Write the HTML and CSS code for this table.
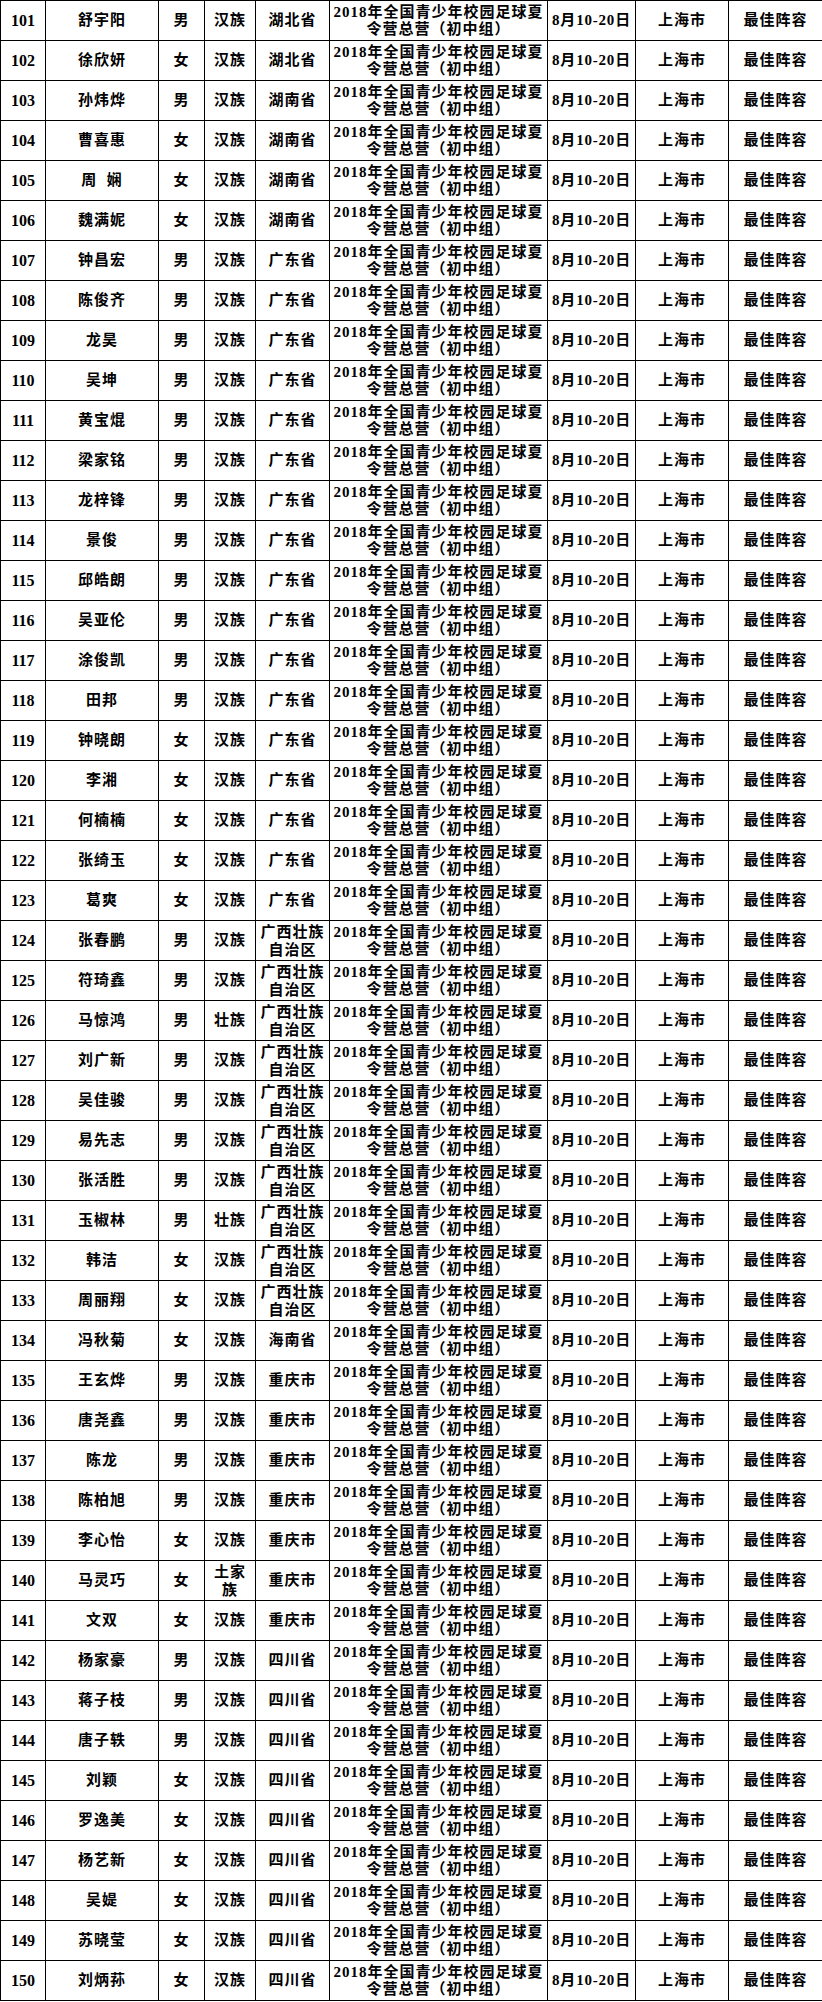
FILE: index.html
```html
<!DOCTYPE html>
<html lang="zh-CN">
<head>
<meta charset="utf-8">
<title>名单</title>
<link rel="stylesheet" href="styles.css">
</head>
<body>
<table class="roster">
<colgroup>
<col class="c-no"><col class="c-name"><col class="c-sex"><col class="c-eth"><col class="c-prov"><col class="c-event"><col class="c-date"><col class="c-city"><col class="c-award">
</colgroup>
<tbody>
<tr><td class="num">101</td><td>舒宇阳</td><td>男</td><td>汉族</td><td>湖北省</td><td class="event">2018年全国青少年校园足球夏<br>令营总营（初中组）</td><td class="date">8月10-20日</td><td>上海市</td><td>最佳阵容</td></tr>
<tr><td class="num">102</td><td>徐欣妍</td><td>女</td><td>汉族</td><td>湖北省</td><td class="event">2018年全国青少年校园足球夏<br>令营总营（初中组）</td><td class="date">8月10-20日</td><td>上海市</td><td>最佳阵容</td></tr>
<tr><td class="num">103</td><td>孙炜烨</td><td>男</td><td>汉族</td><td>湖南省</td><td class="event">2018年全国青少年校园足球夏<br>令营总营（初中组）</td><td class="date">8月10-20日</td><td>上海市</td><td>最佳阵容</td></tr>
<tr><td class="num">104</td><td>曹喜惠</td><td>女</td><td>汉族</td><td>湖南省</td><td class="event">2018年全国青少年校园足球夏<br>令营总营（初中组）</td><td class="date">8月10-20日</td><td>上海市</td><td>最佳阵容</td></tr>
<tr><td class="num">105</td><td>周&nbsp;&nbsp;娴</td><td>女</td><td>汉族</td><td>湖南省</td><td class="event">2018年全国青少年校园足球夏<br>令营总营（初中组）</td><td class="date">8月10-20日</td><td>上海市</td><td>最佳阵容</td></tr>
<tr><td class="num">106</td><td>魏满妮</td><td>女</td><td>汉族</td><td>湖南省</td><td class="event">2018年全国青少年校园足球夏<br>令营总营（初中组）</td><td class="date">8月10-20日</td><td>上海市</td><td>最佳阵容</td></tr>
<tr><td class="num">107</td><td>钟昌宏</td><td>男</td><td>汉族</td><td>广东省</td><td class="event">2018年全国青少年校园足球夏<br>令营总营（初中组）</td><td class="date">8月10-20日</td><td>上海市</td><td>最佳阵容</td></tr>
<tr><td class="num">108</td><td>陈俊齐</td><td>男</td><td>汉族</td><td>广东省</td><td class="event">2018年全国青少年校园足球夏<br>令营总营（初中组）</td><td class="date">8月10-20日</td><td>上海市</td><td>最佳阵容</td></tr>
<tr><td class="num">109</td><td>龙昊</td><td>男</td><td>汉族</td><td>广东省</td><td class="event">2018年全国青少年校园足球夏<br>令营总营（初中组）</td><td class="date">8月10-20日</td><td>上海市</td><td>最佳阵容</td></tr>
<tr><td class="num">110</td><td>吴坤</td><td>男</td><td>汉族</td><td>广东省</td><td class="event">2018年全国青少年校园足球夏<br>令营总营（初中组）</td><td class="date">8月10-20日</td><td>上海市</td><td>最佳阵容</td></tr>
<tr><td class="num">111</td><td>黄宝焜</td><td>男</td><td>汉族</td><td>广东省</td><td class="event">2018年全国青少年校园足球夏<br>令营总营（初中组）</td><td class="date">8月10-20日</td><td>上海市</td><td>最佳阵容</td></tr>
<tr><td class="num">112</td><td>梁家铭</td><td>男</td><td>汉族</td><td>广东省</td><td class="event">2018年全国青少年校园足球夏<br>令营总营（初中组）</td><td class="date">8月10-20日</td><td>上海市</td><td>最佳阵容</td></tr>
<tr><td class="num">113</td><td>龙梓锋</td><td>男</td><td>汉族</td><td>广东省</td><td class="event">2018年全国青少年校园足球夏<br>令营总营（初中组）</td><td class="date">8月10-20日</td><td>上海市</td><td>最佳阵容</td></tr>
<tr><td class="num">114</td><td>景俊</td><td>男</td><td>汉族</td><td>广东省</td><td class="event">2018年全国青少年校园足球夏<br>令营总营（初中组）</td><td class="date">8月10-20日</td><td>上海市</td><td>最佳阵容</td></tr>
<tr><td class="num">115</td><td>邱皓朗</td><td>男</td><td>汉族</td><td>广东省</td><td class="event">2018年全国青少年校园足球夏<br>令营总营（初中组）</td><td class="date">8月10-20日</td><td>上海市</td><td>最佳阵容</td></tr>
<tr><td class="num">116</td><td>吴亚伦</td><td>男</td><td>汉族</td><td>广东省</td><td class="event">2018年全国青少年校园足球夏<br>令营总营（初中组）</td><td class="date">8月10-20日</td><td>上海市</td><td>最佳阵容</td></tr>
<tr><td class="num">117</td><td>涂俊凯</td><td>男</td><td>汉族</td><td>广东省</td><td class="event">2018年全国青少年校园足球夏<br>令营总营（初中组）</td><td class="date">8月10-20日</td><td>上海市</td><td>最佳阵容</td></tr>
<tr><td class="num">118</td><td>田邦</td><td>男</td><td>汉族</td><td>广东省</td><td class="event">2018年全国青少年校园足球夏<br>令营总营（初中组）</td><td class="date">8月10-20日</td><td>上海市</td><td>最佳阵容</td></tr>
<tr><td class="num">119</td><td>钟晓朗</td><td>女</td><td>汉族</td><td>广东省</td><td class="event">2018年全国青少年校园足球夏<br>令营总营（初中组）</td><td class="date">8月10-20日</td><td>上海市</td><td>最佳阵容</td></tr>
<tr><td class="num">120</td><td>李湘</td><td>女</td><td>汉族</td><td>广东省</td><td class="event">2018年全国青少年校园足球夏<br>令营总营（初中组）</td><td class="date">8月10-20日</td><td>上海市</td><td>最佳阵容</td></tr>
<tr><td class="num">121</td><td>何楠楠</td><td>女</td><td>汉族</td><td>广东省</td><td class="event">2018年全国青少年校园足球夏<br>令营总营（初中组）</td><td class="date">8月10-20日</td><td>上海市</td><td>最佳阵容</td></tr>
<tr><td class="num">122</td><td>张绮玉</td><td>女</td><td>汉族</td><td>广东省</td><td class="event">2018年全国青少年校园足球夏<br>令营总营（初中组）</td><td class="date">8月10-20日</td><td>上海市</td><td>最佳阵容</td></tr>
<tr><td class="num">123</td><td>葛爽</td><td>女</td><td>汉族</td><td>广东省</td><td class="event">2018年全国青少年校园足球夏<br>令营总营（初中组）</td><td class="date">8月10-20日</td><td>上海市</td><td>最佳阵容</td></tr>
<tr><td class="num">124</td><td>张春鹏</td><td>男</td><td>汉族</td><td class="prov">广西壮族自治区</td><td class="event">2018年全国青少年校园足球夏<br>令营总营（初中组）</td><td class="date">8月10-20日</td><td>上海市</td><td>最佳阵容</td></tr>
<tr><td class="num">125</td><td>符琦鑫</td><td>男</td><td>汉族</td><td class="prov">广西壮族自治区</td><td class="event">2018年全国青少年校园足球夏<br>令营总营（初中组）</td><td class="date">8月10-20日</td><td>上海市</td><td>最佳阵容</td></tr>
<tr><td class="num">126</td><td>马惊鸿</td><td>男</td><td>壮族</td><td class="prov">广西壮族自治区</td><td class="event">2018年全国青少年校园足球夏<br>令营总营（初中组）</td><td class="date">8月10-20日</td><td>上海市</td><td>最佳阵容</td></tr>
<tr><td class="num">127</td><td>刘广新</td><td>男</td><td>汉族</td><td class="prov">广西壮族自治区</td><td class="event">2018年全国青少年校园足球夏<br>令营总营（初中组）</td><td class="date">8月10-20日</td><td>上海市</td><td>最佳阵容</td></tr>
<tr><td class="num">128</td><td>吴佳骏</td><td>男</td><td>汉族</td><td class="prov">广西壮族自治区</td><td class="event">2018年全国青少年校园足球夏<br>令营总营（初中组）</td><td class="date">8月10-20日</td><td>上海市</td><td>最佳阵容</td></tr>
<tr><td class="num">129</td><td>易先志</td><td>男</td><td>汉族</td><td class="prov">广西壮族自治区</td><td class="event">2018年全国青少年校园足球夏<br>令营总营（初中组）</td><td class="date">8月10-20日</td><td>上海市</td><td>最佳阵容</td></tr>
<tr><td class="num">130</td><td>张活胜</td><td>男</td><td>汉族</td><td class="prov">广西壮族自治区</td><td class="event">2018年全国青少年校园足球夏<br>令营总营（初中组）</td><td class="date">8月10-20日</td><td>上海市</td><td>最佳阵容</td></tr>
<tr><td class="num">131</td><td>玉椒林</td><td>男</td><td>壮族</td><td class="prov">广西壮族自治区</td><td class="event">2018年全国青少年校园足球夏<br>令营总营（初中组）</td><td class="date">8月10-20日</td><td>上海市</td><td>最佳阵容</td></tr>
<tr><td class="num">132</td><td>韩洁</td><td>女</td><td>汉族</td><td class="prov">广西壮族自治区</td><td class="event">2018年全国青少年校园足球夏<br>令营总营（初中组）</td><td class="date">8月10-20日</td><td>上海市</td><td>最佳阵容</td></tr>
<tr><td class="num">133</td><td>周丽翔</td><td>女</td><td>汉族</td><td class="prov">广西壮族自治区</td><td class="event">2018年全国青少年校园足球夏<br>令营总营（初中组）</td><td class="date">8月10-20日</td><td>上海市</td><td>最佳阵容</td></tr>
<tr><td class="num">134</td><td>冯秋菊</td><td>女</td><td>汉族</td><td>海南省</td><td class="event">2018年全国青少年校园足球夏<br>令营总营（初中组）</td><td class="date">8月10-20日</td><td>上海市</td><td>最佳阵容</td></tr>
<tr><td class="num">135</td><td>王玄烨</td><td>男</td><td>汉族</td><td>重庆市</td><td class="event">2018年全国青少年校园足球夏<br>令营总营（初中组）</td><td class="date">8月10-20日</td><td>上海市</td><td>最佳阵容</td></tr>
<tr><td class="num">136</td><td>唐尧鑫</td><td>男</td><td>汉族</td><td>重庆市</td><td class="event">2018年全国青少年校园足球夏<br>令营总营（初中组）</td><td class="date">8月10-20日</td><td>上海市</td><td>最佳阵容</td></tr>
<tr><td class="num">137</td><td>陈龙</td><td>男</td><td>汉族</td><td>重庆市</td><td class="event">2018年全国青少年校园足球夏<br>令营总营（初中组）</td><td class="date">8月10-20日</td><td>上海市</td><td>最佳阵容</td></tr>
<tr><td class="num">138</td><td>陈柏旭</td><td>男</td><td>汉族</td><td>重庆市</td><td class="event">2018年全国青少年校园足球夏<br>令营总营（初中组）</td><td class="date">8月10-20日</td><td>上海市</td><td>最佳阵容</td></tr>
<tr><td class="num">139</td><td>李心怡</td><td>女</td><td>汉族</td><td>重庆市</td><td class="event">2018年全国青少年校园足球夏<br>令营总营（初中组）</td><td class="date">8月10-20日</td><td>上海市</td><td>最佳阵容</td></tr>
<tr><td class="num">140</td><td>马灵巧</td><td>女</td><td class="eth">土家族</td><td>重庆市</td><td class="event">2018年全国青少年校园足球夏<br>令营总营（初中组）</td><td class="date">8月10-20日</td><td>上海市</td><td>最佳阵容</td></tr>
<tr><td class="num">141</td><td>文双</td><td>女</td><td>汉族</td><td>重庆市</td><td class="event">2018年全国青少年校园足球夏<br>令营总营（初中组）</td><td class="date">8月10-20日</td><td>上海市</td><td>最佳阵容</td></tr>
<tr><td class="num">142</td><td>杨家豪</td><td>男</td><td>汉族</td><td>四川省</td><td class="event">2018年全国青少年校园足球夏<br>令营总营（初中组）</td><td class="date">8月10-20日</td><td>上海市</td><td>最佳阵容</td></tr>
<tr><td class="num">143</td><td>蒋子枝</td><td>男</td><td>汉族</td><td>四川省</td><td class="event">2018年全国青少年校园足球夏<br>令营总营（初中组）</td><td class="date">8月10-20日</td><td>上海市</td><td>最佳阵容</td></tr>
<tr><td class="num">144</td><td>唐子轶</td><td>男</td><td>汉族</td><td>四川省</td><td class="event">2018年全国青少年校园足球夏<br>令营总营（初中组）</td><td class="date">8月10-20日</td><td>上海市</td><td>最佳阵容</td></tr>
<tr><td class="num">145</td><td>刘颖</td><td>女</td><td>汉族</td><td>四川省</td><td class="event">2018年全国青少年校园足球夏<br>令营总营（初中组）</td><td class="date">8月10-20日</td><td>上海市</td><td>最佳阵容</td></tr>
<tr><td class="num">146</td><td>罗逸美</td><td>女</td><td>汉族</td><td>四川省</td><td class="event">2018年全国青少年校园足球夏<br>令营总营（初中组）</td><td class="date">8月10-20日</td><td>上海市</td><td>最佳阵容</td></tr>
<tr><td class="num">147</td><td>杨艺新</td><td>女</td><td>汉族</td><td>四川省</td><td class="event">2018年全国青少年校园足球夏<br>令营总营（初中组）</td><td class="date">8月10-20日</td><td>上海市</td><td>最佳阵容</td></tr>
<tr><td class="num">148</td><td>吴媞</td><td>女</td><td>汉族</td><td>四川省</td><td class="event">2018年全国青少年校园足球夏<br>令营总营（初中组）</td><td class="date">8月10-20日</td><td>上海市</td><td>最佳阵容</td></tr>
<tr><td class="num">149</td><td>苏晓莹</td><td>女</td><td>汉族</td><td>四川省</td><td class="event">2018年全国青少年校园足球夏<br>令营总营（初中组）</td><td class="date">8月10-20日</td><td>上海市</td><td>最佳阵容</td></tr>
<tr><td class="num">150</td><td>刘炳荪</td><td>女</td><td>汉族</td><td>四川省</td><td class="event">2018年全国青少年校园足球夏<br>令营总营（初中组）</td><td class="date">8月10-20日</td><td>上海市</td><td>最佳阵容</td></tr>
</tbody>
</table>
</body>
</html>
```
FILE: styles.css
```css
html, body {
  margin: 0;
  padding: 0;
  background: #ffffff;
}

.roster {
  border-collapse: collapse;
  table-layout: fixed;
  width: 822px;
  font-family: "Liberation Serif", "Noto Sans CJK SC", serif;
  font-weight: 700;
  color: #000000;
}

.c-no { width: 45px; }
.c-name { width: 113px; }
.c-sex { width: 46px; }
.c-eth { width: 51px; }
.c-prov { width: 74px; }
.c-event { width: 218px; }
.c-date { width: 88px; }
.c-city { width: 93px; }
.c-award { width: 94px; }

.roster td {
  border: 1px solid #000000;
  height: 39px;
  padding: 0 3px;
  text-align: center;
  vertical-align: middle;
  font-size: 15px;
  line-height: 17px;
  letter-spacing: 1px;
  overflow: hidden;
}

.roster td.num {
  font-size: 16px;
  letter-spacing: 0;
  padding: 0 2px;
}

.roster td.prov {
  line-height: 18px;
}

.roster td.eth {
  padding: 0 4px;
  line-height: 18px;
}

.roster td.event {
  padding: 0 2px;
  white-space: nowrap;
}

.roster td.date {
  letter-spacing: 0.8px;
  padding: 0 1px;
  white-space: nowrap;
}
```
